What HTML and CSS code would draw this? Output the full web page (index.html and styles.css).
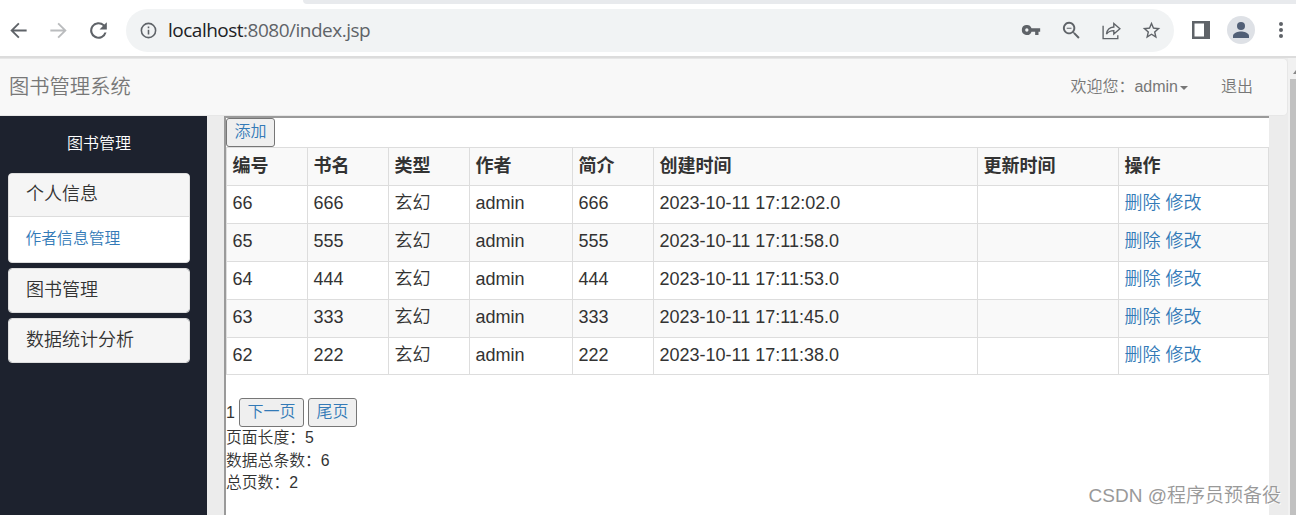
FILE: index.html
```html
<!DOCTYPE html>
<html lang="zh-CN">
<head>
    <meta charset="UTF-8">
    <title>图书管理系统</title>
    <link rel="stylesheet" href="styles.css">
</head>
<body>
    <div class="tab-strip"></div>
    <div class="toolbar">
        <svg class="icon back" viewBox="0 0 24 24"><path d="M20.5 11H7.3l5.8-5.8L11.7 3.8 3.5 12l8.2 8.2 1.4-1.4L7.3 13h13.2z"/></svg>
        <svg class="icon forward" viewBox="0 0 24 24"><path d="M3.5 11h13.2l-5.8-5.8 1.4-1.4 8.2 8.2-8.2 8.2-1.4-1.4 5.8-5.8H3.5z"/></svg>
        <svg class="icon reload" viewBox="0 0 24 24"><path d="M17.65 6.35A8 8 0 1 0 19.73 14h-2.08A6 6 0 1 1 12 6c1.66 0 3.14.69 4.22 1.78L13 11h7V4z"/></svg>
        <div class="address">
            <svg class="icon info" viewBox="0 0 24 24"><path d="M11 7h2v2h-2zm0 4h2v6h-2zm1-9a10 10 0 1 0 0 20 10 10 0 0 0 0-20zm0 18a8 8 0 1 1 0-16 8 8 0 0 1 0 16z"/></svg>
            <span class="url"><b>localhost</b>:8080/index.jsp</span>
            <svg class="icon key" viewBox="0 0 24 24"><path d="M12.65 10A6 6 0 0 0 1 12a6 6 0 0 0 11.65 2H17v4h4v-4h2v-4zM7 14a2 2 0 1 1 0-4 2 2 0 0 1 0 4z"/></svg>
            <svg class="icon zoom-out" viewBox="0 0 24 24"><path d="M15.5 14h-.79l-.28-.27A6.5 6.5 0 1 0 13.73 14.43l.27.28v.79l5 4.99L20.49 19zm-6 0a4.5 4.5 0 1 1 0-9 4.5 4.5 0 0 1 0 9zM7 9h5v1.2H7z"/></svg>
            <svg class="icon share" viewBox="0 0 20 20"><path d="M2 5.5v12.3h14v-3.2M5.2 13.5c.5-4 2.8-6.5 7-6.8V3.3l5.8 5-5.8 5v-3.2c-3.2 0-5.3 1-7 3.4z"/></svg>
            <svg class="icon star" viewBox="0 0 24 24"><path d="M22 9.24l-7.19-.62L12 2 9.19 8.63 2 9.24l5.46 4.73L5.82 21 12 17.27 18.18 21l-1.63-7.03zM12 15.4l-3.76 2.27 1-4.28-3.32-2.88 4.38-.38L12 6.1l1.71 4.04 4.38.38-3.32 2.88 1 4.28z"/></svg>
        </div>
        <svg class="icon panel" viewBox="0 0 18 18"><path fill-rule="evenodd" d="M0 0h18v18H0zM2.5 2.5v13H12v-13z"/></svg>
        <svg class="avatar" viewBox="0 0 28 28"><circle cx="14" cy="14" r="14" fill="#dee1e6"/><circle cx="14" cy="10" r="4" fill="#515f76"/><path fill="#515f76" d="M6 22v-2.2c0-2.9 5.3-4.3 8-4.3s8 1.4 8 4.3V22z"/></svg>
        <svg class="icon dots" viewBox="0 0 4 16"><circle cx="2" cy="2" r="2"/><circle cx="2" cy="8" r="2"/><circle cx="2" cy="14" r="2"/></svg>
    </div>

    <div class="viewport">
        <div class="page">
            <nav class="navbar">
                <a class="brand">图书管理系统</a>
                <a class="user">欢迎您：admin<span class="caret"></span></a>
                <a class="logout">退出</a>
            </nav>
            <div class="main">
                <div class="sidebar">
                    <div class="side-title">图书管理</div>
                    <div class="panel-box">
                        <div class="panel-heading open">个人信息</div>
                        <div class="panel-body"><a>作者信息管理</a></div>
                    </div>
                    <div class="panel-box"><div class="panel-heading">图书管理</div></div>
                    <div class="panel-box"><div class="panel-heading">数据统计分析</div></div>
                </div>
                <div class="frame">
                    <button class="add"><a>添加</a></button>
                    <table class="table">
                        <colgroup>
                            <col class="w-sm"><col class="w-sm"><col class="w-sm"><col class="w-author"><col class="w-sm"><col class="w-created"><col class="w-updated"><col>
                        </colgroup>
                        <tr><th>编号</th><th>书名</th><th>类型</th><th>作者</th><th>简介</th><th>创建时间</th><th>更新时间</th><th>操作</th></tr>
                        <tr><td>66</td><td>666</td><td>玄幻</td><td>admin</td><td>666</td><td>2023-10-11 17:12:02.0</td><td></td><td><a>删除</a> <a>修改</a></td></tr>
                        <tr><td>65</td><td>555</td><td>玄幻</td><td>admin</td><td>555</td><td>2023-10-11 17:11:58.0</td><td></td><td><a>删除</a> <a>修改</a></td></tr>
                        <tr><td>64</td><td>444</td><td>玄幻</td><td>admin</td><td>444</td><td>2023-10-11 17:11:53.0</td><td></td><td><a>删除</a> <a>修改</a></td></tr>
                        <tr><td>63</td><td>333</td><td>玄幻</td><td>admin</td><td>333</td><td>2023-10-11 17:11:45.0</td><td></td><td><a>删除</a> <a>修改</a></td></tr>
                        <tr><td>62</td><td>222</td><td>玄幻</td><td>admin</td><td>222</td><td>2023-10-11 17:11:38.0</td><td></td><td><a>删除</a> <a>修改</a></td></tr>
                    </table>
                    <div class="pager"><span>1</span><button class="next"><a>下一页</a></button><button class="last"><a>尾页</a></button></div>
                    <div class="total">页面长度：5</div>
                    <div class="total">数据总条数：6</div>
                    <div class="total">总页数：2</div>
                </div>
            </div>
        </div>
        <div class="scrollbar"><div class="arrow"></div><div class="thumb"></div></div>
    </div>
    <div class="watermark">CSDN @程序员预备役</div>
</body>
</html>
```
FILE: styles.css
```css
* { box-sizing: border-box; }
body { margin: 0; height: 515px; overflow: hidden; background: #fff; color: #333; font: 350 16px/23px "Liberation Sans", "Noto Sans CJK SC", sans-serif; }
a { color: #337ab7; text-decoration: none; }

/* browser bar */
.tab-strip { height: 4px; margin-left: 303px; background: #e8eaed; border-bottom-left-radius: 8px; }
.toolbar { display: flex; align-items: center; height: 54px; border-bottom: 2px solid #dcdcdc; }
.icon { display: block; flex: none; fill: #5f6368; }
.back, .forward { width: 23px; height: 23px; }
.back { margin-left: 7px; }
.forward { margin-left: 17px; fill: #babcbe; }
.reload { width: 25px; height: 25px; margin-left: 16px; }
.address { display: flex; align-items: center; width: 1048px; height: 43px; margin-left: 15px; padding-left: 13px; border-radius: 22px; background: #f1f3f4; }
.info { width: 19px; height: 19px; }
.url { width: 856px; margin-left: 10px; color: #5f6368; font: 400 19px/26px "Open Sans", "Noto Sans", sans-serif; letter-spacing: -0.5px; }
.url b { color: #202124; font-weight: normal; }
.key { width: 20px; height: 20px; margin-left: -3px; }
.zoom-out { width: 23px; height: 23px; margin-left: 19px; }
.share { width: 21px; height: 21px; margin-left: 18px; fill: none; stroke: #5f6368; stroke-width: 1.3; }
.star { width: 21px; height: 21px; margin-left: 19px; }
.panel { width: 18px; height: 18px; margin-left: 18px; }
.avatar { flex: none; width: 28px; height: 28px; margin-left: 17px; }
.dots { width: 4px; height: 16px; margin-left: 24px; }

.viewport { display: flex; height: 457px; }
.page { width: 1288px; background: #ececec; }
.scrollbar { width: 8px; padding-left: 2px; background: #f1f1f1; }
.arrow { width: 0; height: 0; margin: 12px 0 0 3px; border: solid transparent; border-width: 0 3px 4px; border-bottom-color: #888; }
.thumb { height: 440px; margin-top: 5px; background: #c1c1c1; }

.navbar { display: flex; align-items: center; height: 58px; padding-bottom: 1px; border: 1px solid #e7e7e7; border-left: 0; border-radius: 0 5px 5px 0; background: #f8f8f8; }
.navbar a { color: #777; }
.brand { flex: 1; padding: 2px 0 0 9px; font-size: 20.3px; }
.caret { display: inline-block; margin-left: 2px; border: 4px solid transparent; border-top-color: #777; border-bottom: 0; vertical-align: middle; }
.logout { margin: 0 34px 0 33px; }

.main { display: flex; height: 399px; }
.sidebar { width: 207px; padding: 16px 17px 0 8px; background: #1d222e; }
.side-title { height: 41px; color: #fff; text-align: center; }
.panel-box { margin-bottom: 5px; overflow: hidden; border: 1px solid #ddd; border-radius: 4px; background: #fff; }
.panel-heading { height: 43px; padding: 10px 17px; background: #f5f5f5; font-size: 18px; }
.panel-heading.open { height: 42px; padding-top: 9px; }
.panel-body { height: 46px; padding: 10px 16.5px; border-top: 1px solid #ddd; font-size: 15.8px; }

.frame { width: 1045px; margin-left: 17px; border: solid #9a9a9a; border-width: 2px 0 0 2px; background: #fff; }
button { height: 29px; padding: 0 0 2px; border: 1px solid #767676; border-radius: 3px; background: #efefef; font: inherit; }
.add { display: block; width: 49px; }
.table { width: 1043px; table-layout: fixed; border-collapse: collapse; font-size: 18px; }
.table th, .table td { height: 38px; padding: 0 5.5px 2px; border: 1px solid #ddd; text-align: left; }
.table tr:last-child td { height: 37px; padding-bottom: 1px; }
.table tr:nth-child(odd) { background: #f9f9f9; }
.table th { padding-bottom: 1px; font-weight: bold; }
.w-sm { width: 81px; }
.w-author { width: 103px; }
.w-created { width: 324px; }
.w-updated { width: 141px; }
.pager { display: flex; align-items: center; gap: 4px; height: 29px; margin: 23px 0 -1px; }
.next { width: 65px; }
.last { width: 49px; }
.total { height: 22.5px; font-size: 15.8px; }

.watermark { position: absolute; right: 15px; bottom: 5px; color: #999; font-size: 19px; line-height: 28px; text-shadow: 1px 1px 0 #fff; }
```
